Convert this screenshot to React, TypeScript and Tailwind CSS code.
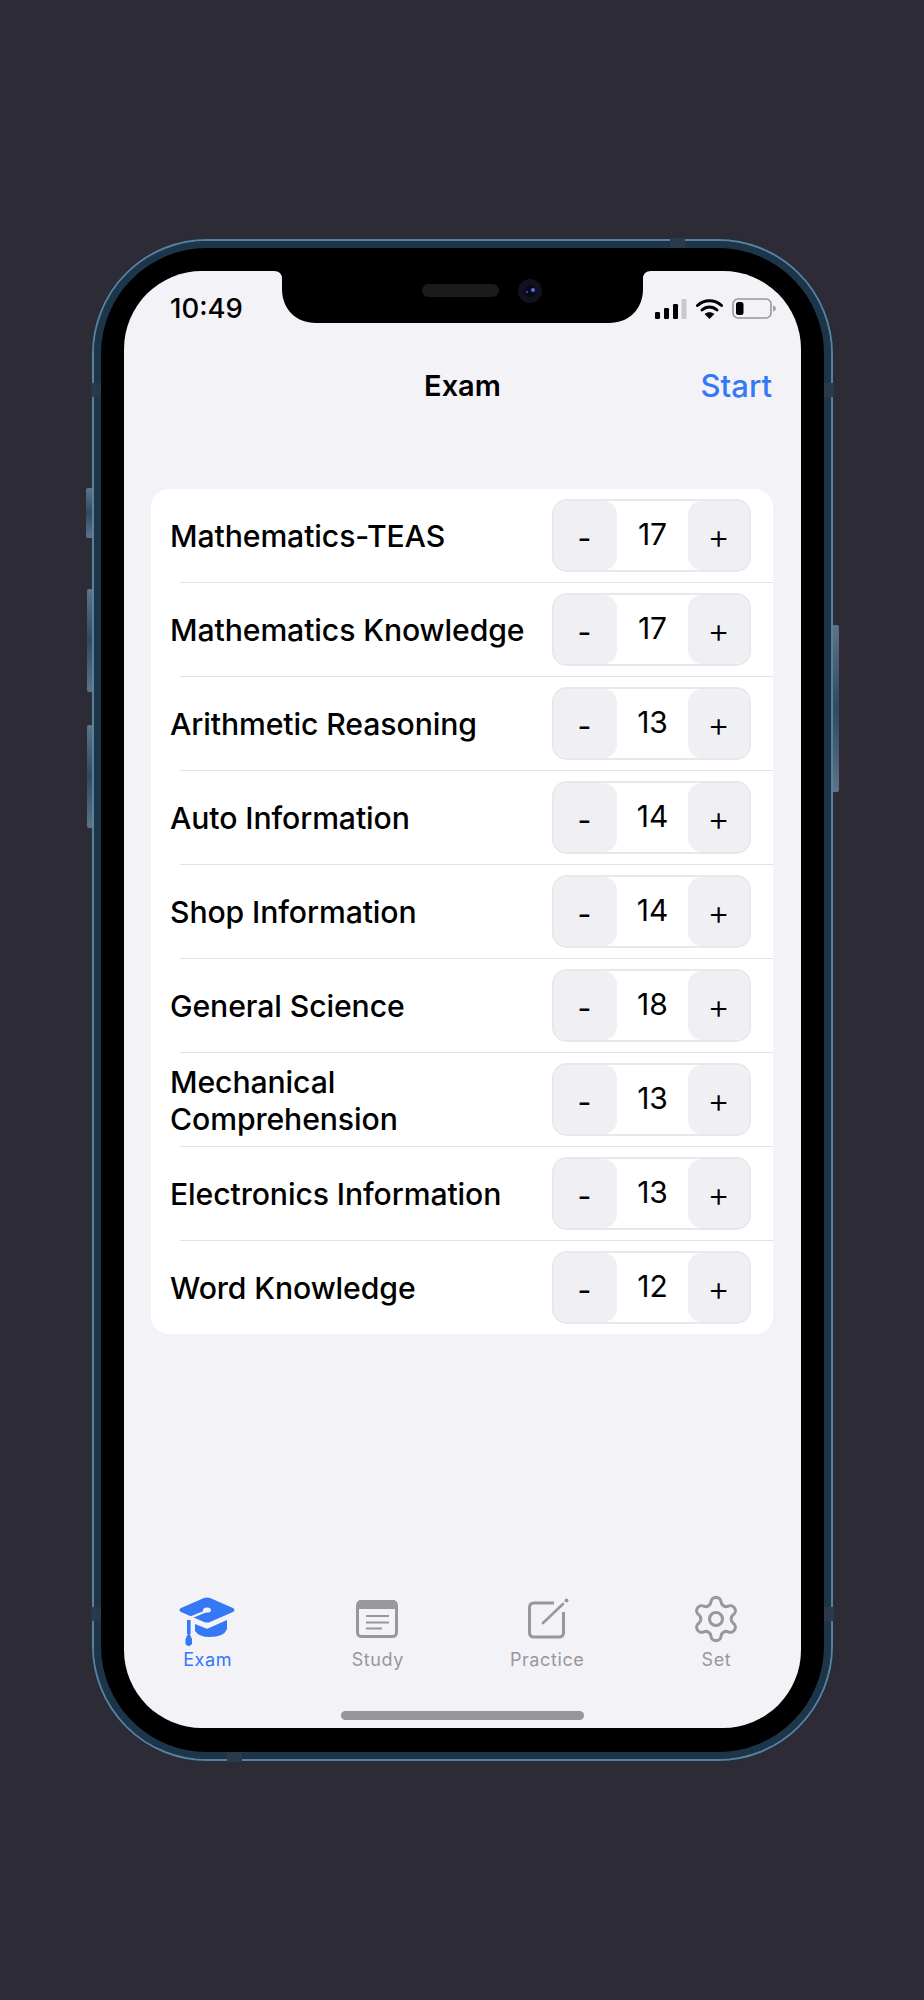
import { Settings } from "lucide-react";

const rows: [string, number][] = [
  ["Mathematics-TEAS", 17],
  ["Mathematics Knowledge", 17],
  ["Arithmetic Reasoning", 13],
  ["Auto Information", 14],
  ["Shop Information", 14],
  ["General Science", 18],
  ["Mechanical Comprehension", 13],
  ["Electronics Information", 13],
  ["Word Knowledge", 12],
];

function Notch() {
  return (
    <svg className="absolute left-[150px] top-0" width="377" height="52" viewBox="0 0 377 52">
      <path d="M0 0Q8 0 8 8V18C8 38 22 52 42 52H335C355 52 369 38 369 18V8Q369 0 377 0Z" fill="#000" />
      <rect x="148" y="13" width="77" height="13" rx="6.5" fill="#1b1b1d" />
      <circle cx="256" cy="20" r="12" fill="#10131d" />
      <circle cx="256" cy="20" r="6" fill="#070a18" />
      <circle cx="259" cy="19" r="2" fill="#5a6fe0" />
      <circle cx="253" cy="21" r="1" fill="#8a3fb0" />
    </svg>
  );
}

function StatusIcons() {
  return (
    <div className="flex items-center">
      <svg width="32" height="20" viewBox="0 0 32 20">
        <rect x="0" y="13" width="5" height="7" rx="1.3" fill="#000" />
        <rect x="9" y="9" width="5" height="11" rx="1.3" fill="#000" />
        <rect x="18" y="5" width="5" height="15" rx="1.3" fill="#000" />
        <rect x="26.5" y="0" width="5" height="20" rx="1.3" fill="#c9c9cc" />
      </svg>
      <svg className="ml-[9px]" width="27" height="20" viewBox="0 0 27 20">
        <path d="M1.5 6.5C8.5 .3 18.5 .3 25.5 6.5" fill="none" stroke="#000" strokeWidth="3" strokeLinecap="round" />
        <path d="M6 11C10.5 7 16.5 7 21 11" fill="none" stroke="#000" strokeWidth="3" strokeLinecap="round" />
        <path d="M13.5 20L8.6 15C11.5 12.6 15.5 12.6 18.4 15Z" fill="#000" />
      </svg>
      <svg className="ml-[9px]" width="44" height="21" viewBox="0 0 44 21">
        <rect x="1" y="1" width="38" height="19" rx="5" fill="none" stroke="#98989c" strokeWidth="1.6" />
        <rect x="4" y="4" width="7.5" height="13" rx="2.5" fill="#000" />
        <path d="M41 7.5C43 8 44 9.2 44 10.5S43 13 41 13.5Z" fill="#a5a5a8" />
      </svg>
    </div>
  );
}

function Row({ name, value }: { name: string; value: number }) {
  return (
    <div className="h-[93px] flex items-center justify-between pl-[19px] pr-[22px]">
      <span className="w-[372px] text-[30.2px] leading-[36.5px] font-medium text-black tracking-[-0.1px] pt-[2px]">{name}</span>
      <div className="w-[199px] h-[73px] flex rounded-[15px] border-2 border-[#e7e7ec] bg-white overflow-hidden">
        <div className="w-[63px] bg-[#f0eff4] rounded-r-[14px] flex items-center justify-center pr-[2px] text-[30px] font-normal pt-[5px]">-</div>
        <div className="flex-1 flex items-center justify-center text-[30px] font-normal pb-[3px] text-black">{value}</div>
        <div className="w-[61px] bg-[#f0eff4] rounded-l-[14px] flex items-center justify-center text-[34px] font-light pt-[2px]">+</div>
      </div>
    </div>
  );
}

function Cap() {
  return (
    <svg width="56" height="50" viewBox="0 0 56 50">
      <path d="M2 11L25 1Q28 0 31 1L54 11Q57 13 54 15L31 25Q28 26 25 25L2 15Q-1 13 2 11Z" fill="#3478f6" />
      <path d="M16 27L26 31Q28 32 30 31L48 23V32Q45 40 31 40Q20 40 16 34Z" fill="#3478f6" />
      <path d="M30 13L13 20V37" fill="none" stroke="#f2f2f7" strokeWidth="2.4" />
      <ellipse cx="28" cy="13" rx="4" ry="2.6" fill="#f2f2f7" />
      <rect x="8" y="23" width="3.6" height="14" fill="#3478f6" />
      <path d="M9.8 35L6.5 42V47Q9.8 51 13 47V42Z" fill="#3478f6" />
    </svg>
  );
}

function Study() {
  return (
    <svg width="42" height="38" viewBox="0 0 42 38" fill="none">
      <rect x="1.5" y="1.5" width="39" height="35" rx="4" stroke="#98989c" strokeWidth="3" />
      <path d="M1 9V5Q1 0 5 0H37Q41 0 41 5V9Z" fill="#98989c" />
      <path d="M10 16H33M10 22.5H33M10 28.5H26" stroke="#98989c" strokeWidth="2" />
    </svg>
  );
}

function Practice() {
  return (
    <svg width="41" height="41" viewBox="0 0 41 41" fill="none">
      <path d="M26 5H6Q1.5 5 1.5 9.5V34.5Q1.5 39 6 39H31Q35.5 39 35.5 34.5V14" stroke="#98989c" strokeWidth="3" />
      <path d="M15 25L35 6" stroke="#98989c" strokeWidth="2.6" strokeLinecap="round" />
      <circle cx="38.5" cy="2.5" r="2" fill="#98989c" />
    </svg>
  );
}

function Tab({ label, active, children }: { label: string; active?: boolean; children: React.ReactNode }) {
  return (
    <div className="flex flex-col items-center">
      <div className="h-[52px] flex items-start justify-center">{children}</div>
      <span className={`text-[18px] leading-[22px] font-normal tracking-[0.6px] ${active ? "text-[#3478f6] mr-[2px]" : "text-[#98989c]"}`}>{label}</span>
    </div>
  );
}

const band = "absolute bg-[#2a3a4a]";
const key = "absolute bg-linear-to-b from-[#5c7488] via-[#2f4a61] to-[#5c7488]";

export default function App() {
  return (
    <div
      className="w-[924px] h-[2000px] bg-[#2d2b35] pt-[238px] pl-[91px]"
      style={{ fontFamily: "Inter, 'Liberation Sans', sans-serif" }}
    >
      <div className="relative w-[743px] h-[1524px]">
        <div className={`${key} left-[-5px] top-[250px] w-[6px] h-[50px] rounded-l-[2px]`} />
        <div className={`${key} left-[-4px] top-[351px] w-[5px] h-[103px] rounded-l-[2px]`} />
        <div className={`${key} left-[-4px] top-[487px] w-[5px] h-[103px] rounded-l-[2px]`} />
        <div className={`${key} right-[-5px] top-[387px] w-[6px] h-[167px] rounded-r-[2px]`} />

        <div className="w-full h-full rounded-[116px] border border-[#20303f] bg-[#1d3549]">
          <div className="w-full h-full rounded-[115px] border-2 border-[#5c7f9c]">
            <div className="w-full h-full rounded-[113px] border-[7px] border-[#1d3549]">
              <div className="w-full h-full rounded-[106px] bg-black pt-[23px] pb-[24px] px-[23px]">
                <div className="relative w-full h-full rounded-[78px] bg-[#f2f2f7] overflow-hidden flex flex-col">
                  <Notch />
                  <div className="h-[70px] flex items-start justify-between pt-[21px] pl-[46px] pr-[25px] shrink-0">
                    <span className="text-[27.5px] leading-[32px] font-medium text-black">10:49</span>
                    <div className="pt-[6px]">
                      <StatusIcons />
                    </div>
                  </div>
                  <div className="h-[90px] relative flex items-center justify-center shrink-0">
                    <span className="text-[29px] font-semibold text-black">Exam</span>
                    <span className="absolute right-[29px] text-[31px] font-medium text-[#3478f6]">Start</span>
                  </div>
                  <div className="mt-[58px] ml-[27px] mr-[28px] bg-white rounded-[18px] overflow-hidden shrink-0">
                    {rows.map(([n, v], i) => (
                      <div key={n}>
                        {i > 0 && <div className="h-px ml-[29px] bg-[#e2e2e6]" />}
                        <Row name={n} value={v} />
                      </div>
                    ))}
                  </div>
                  <div className="flex-1" />
                  <div className="grid grid-cols-4 shrink-0">
                    <Tab label="Exam" active>
                      <div className="mr-[4px]"><Cap /></div>
                    </Tab>
                    <Tab label="Study">
                      <div className="pt-[3px] mr-[1px]"><Study /></div>
                    </Tab>
                    <Tab label="Practice">
                      <div className="pt-[1px] ml-[3px]"><Practice /></div>
                    </Tab>
                    <Tab label="Set">
                      <Settings size={52} strokeWidth={1.4} color="#98989c" className="mt-[-4px]" />
                    </Tab>
                  </div>
                  <div className="mt-[40px] mb-[8px] mx-auto w-[243px] h-[9px] rounded-full bg-[#979797] shrink-0" />
                </div>
              </div>
            </div>
          </div>
        </div>

        <div className={`${band} left-0 top-[145px] w-[10px] h-[14px]`} />
        <div className={`${band} right-0 top-[145px] w-[10px] h-[14px]`} />
        <div className={`${band} left-0 top-[1369px] w-[10px] h-[14px]`} />
        <div className={`${band} right-0 top-[1369px] w-[10px] h-[14px]`} />
        <div className={`${band} left-[579px] top-0 w-[15px] h-[10px]`} />
        <div className={`${band} left-[136px] bottom-0 w-[15px] h-[10px]`} />
      </div>
    </div>
  );
}
